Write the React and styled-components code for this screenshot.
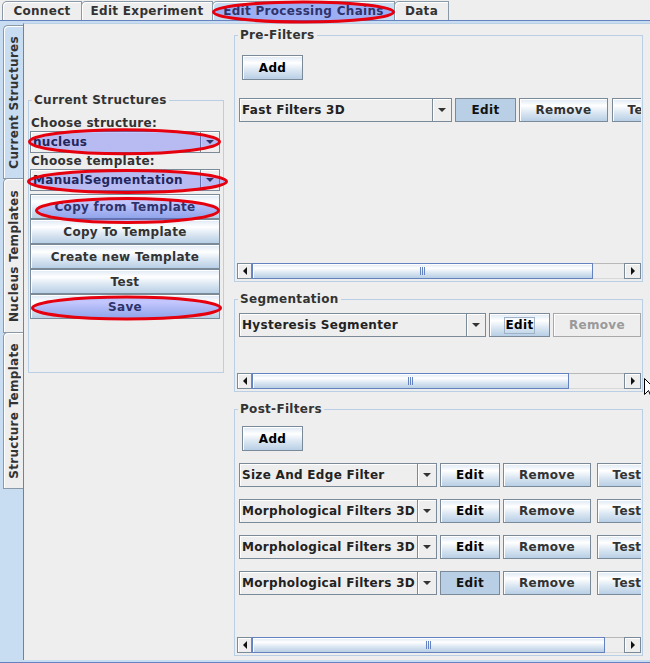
import styled, { createGlobalStyle } from "styled-components";

const GlobalStyle = createGlobalStyle`
  html, body {
    margin: 0;
    padding: 0;
    background: #eeeeee;
  }
  body {
    font-family: "DejaVu Sans", "Liberation Sans", sans-serif;
    font-size: 12px;
    font-weight: bold;
    letter-spacing: 0.3px;
    color: #333333;
  }
  * {
    box-sizing: border-box;
  }
`;

const Window = styled.div`
  position: relative;
  width: 650px;
  height: 663px;
  overflow: hidden;
  display: flex;
  flex-direction: column;
  background: #eeeeee;
`;

const TabRow = styled.div`
  display: flex;
  align-items: flex-end;
  height: 20px;
  padding-left: 2px;
`;

const TopTab = styled.div`
  width: ${(p) => p.$w}px;
  height: 19px;
  display: flex;
  align-items: center;
  justify-content: center;
  background: ${(p) => (p.$active ? "#c8ddf2" : "#eeeeee")};
  border: 1px solid #8a99a8;
  border-bottom: none;
  border-top-left-radius: 5px;
  box-shadow: inset 1px 1px 0 #ffffff;
  color: #333333;
  white-space: nowrap;
  & + & {
    margin-left: -1px;
  }
`;

const TabBody = styled.div`
  flex: 1;
  min-height: 0;
  display: flex;
  background: #c8ddf2;
  border-top: 1px solid #6382bf;
  border-bottom: 1px solid #6382bf;
  padding: 2px 0;
`;

const SideTabs = styled.div`
  width: 23px;
  flex-shrink: 0;
  display: flex;
  flex-direction: column;
  padding: 2px 0 0 3px;
`;

const SideTab = styled.div`
  height: ${(p) => p.$h}px;
  display: flex;
  align-items: center;
  justify-content: center;
  background: ${(p) => (p.$active ? "#c8ddf2" : "#eeeeee")};
  border: 1px solid #8a99a8;
  border-right: none;
  border-top-left-radius: 5px;
  box-shadow: inset 1px 1px 0 #ffffff;
  & + & {
    margin-top: -1px;
  }
`;

const SideTabLabel = styled.span`
  writing-mode: vertical-rl;
  transform: rotate(180deg);
  white-space: nowrap;
  color: #333333;
`;

const Panel = styled.div`
  flex: 1;
  min-width: 0;
  display: flex;
  align-items: flex-start;
  background: #eeeeee;
  border-left: 1px solid #6382bf;
  border-top: 1px solid #b8cfe5;
`;

const LeftCol = styled.div`
  margin: 69px 0 0 4px;
  width: 196px;
  flex-shrink: 0;
`;

const RightCol = styled.div`
  margin: 4px 0 0 10px;
  width: 409px;
  flex-shrink: 0;
  display: flex;
  flex-direction: column;
  gap: 10px;
`;

const Group = styled.fieldset`
  margin: 0;
  padding: 0;
  min-width: 0;
  width: 100%;
  border: 1px solid #b8cfe5;
`;

const GroupTitle = styled.legend`
  margin-left: 3px;
  padding: 0 2px;
  line-height: 14px;
  color: #333333;
`;

const GroupBody = styled.div`
  height: ${(p) => p.$h}px;
  display: flex;
  flex-direction: column;
  padding-top: ${(p) => p.$top || 0}px;
`;

const StackBody = styled.div`
  display: flex;
  flex-direction: column;
  padding: 8px 3px 53px 1px;
`;

const FieldLabel = styled.div`
  height: 16px;
  line-height: 16px;
  padding-left: 1px;
  color: #333333;
`;

const Btn = styled.button`
  width: ${(p) => (p.$w ? `${p.$w}px` : "100%")};
  height: ${(p) => p.$h || 24}px;
  flex-shrink: 0;
  padding: 0;
  margin: 0;
  margin-left: ${(p) => p.$push || 0}px;
  display: flex;
  align-items: center;
  justify-content: center;
  font: inherit;
  letter-spacing: inherit;
  color: ${(p) => (p.$dark ? "#000000" : "#333333")};
  border: 1px solid #7a8a99;
  background: linear-gradient(#dde8f3 0%, #ffffff 30%, #dde8f3 60%, #b8cfe5 100%);
  box-shadow: inset 1px 1px 0 #ffffff;
  white-space: nowrap;
  ${(p) =>
    p.$pressed &&
    `
    background: #b8cfe5;
    box-shadow: none;
    color: #111111;
  `}
  ${(p) =>
    p.$off &&
    `
    background: #eeeeee;
    border-color: #a8a8a8;
    color: #9a9a9a;
  `}
`;

const AddBtn = styled(Btn)`
  margin-left: 7px;
  color: #000000;
`;

const FocusRing = styled.span`
  border: 1px solid #9fb3c8;
  padding: 0 1px;
  line-height: 15px;
  color: #000000;
`;

const ButtonStack = styled.div`
  margin-top: 3px;
  display: flex;
  flex-direction: column;
`;

const Combo = styled.div`
  width: ${(p) => (p.$w ? `${p.$w}px` : "100%")};
  height: ${(p) => p.$h || 24}px;
  flex-shrink: 0;
  display: flex;
  border: 1px solid #7a8a99;
  background: #eeeeee;
  box-shadow: inset 1px 1px 0 #ffffff;
`;

const ComboText = styled.span`
  flex: 1;
  min-width: 0;
  display: flex;
  align-items: center;
  padding-left: 2px;
  overflow: hidden;
  white-space: nowrap;
  color: #222222;
`;

const ComboArrow = styled.span`
  width: 19px;
  flex-shrink: 0;
  display: flex;
  align-items: center;
  justify-content: center;
  border-left: 1px solid #7a8a99;
  box-shadow: inset 1px 1px 0 #ffffff;
  &::after {
    content: "";
    border-left: 4px solid transparent;
    border-right: 4px solid transparent;
    border-top: 4px solid #333333;
  }
`;

const ScrollPane = styled.div`
  flex: 1;
  min-height: 0;
  display: flex;
  flex-direction: column;
  margin: 0 1px 2px 2px;
`;

const Viewport = styled.div`
  flex: 1;
  min-height: 0;
  overflow: hidden;
  display: flex;
  flex-direction: column;
  gap: 12px;
  padding: ${(p) => p.$top}px 0 0 2px;
`;

const Row = styled.div`
  display: flex;
  gap: 3px;
  height: 24px;
  flex-shrink: 0;
`;

const ScrollBar = styled.div`
  height: 16px;
  flex-shrink: 0;
  display: flex;
  background: #eeeeee;
`;

const ScrollArrow = styled.div`
  width: ${(p) => p.$w}px;
  flex-shrink: 0;
  display: flex;
  align-items: center;
  justify-content: center;
  border: 1px solid #7a8a99;
  box-shadow: inset 1px 1px 0 #ffffff;
  &::after {
    content: "";
    border-top: 4px solid transparent;
    border-bottom: 4px solid transparent;
    ${(p) => (p.$dir === "left" ? "border-right: 4px solid #111;" : "border-left: 4px solid #111;")}
  }
`;

const Thumb = styled.div`
  width: ${(p) => p.$w}px;
  flex-shrink: 0;
  display: flex;
  align-items: center;
  justify-content: center;
  border: 1px solid #6382bf;
  background: linear-gradient(#dde8f3 0%, #ffffff 30%, #dde8f3 60%, #b8cfe5 100%);
  box-shadow: inset 1px 1px 0 #ffffff;
  &::after {
    content: "";
    width: 5px;
    height: 8px;
    background: repeating-linear-gradient(to right, #6382bf 0 1px, transparent 1px 2px);
  }
`;

const Track = styled.div`
  flex: 1;
  border-top: 1px solid #b8b8b8;
  border-bottom: 1px solid #d8d8d8;
`;

const Overlay = styled.svg`
  position: absolute;
  left: 0;
  top: 0;
  pointer-events: none;
`;

function Scroller({ thumb }) {
  return (
    <ScrollBar>
      <ScrollArrow $w={15} $dir="left" />
      <Thumb $w={thumb} />
      <Track />
      <ScrollArrow $w={17} $dir="right" />
    </ScrollBar>
  );
}

function FilterRow({ row }) {
  return (
    <Row>
      <Combo $w={row.combo}>
        <ComboText>{row.name}</ComboText>
        <ComboArrow />
      </Combo>
      <Btn $w={row.edit} $pressed={row.pressed} $dark>
        Edit
      </Btn>
      <Btn $w={row.remove}>Remove</Btn>
      <Btn $w={60} $push={row.push}>
        Test
      </Btn>
    </Row>
  );
}

const preRows = [
  { name: "Fast Filters 3D", combo: 213, edit: 61, remove: 89, pressed: true, push: 1 },
];

const postRows = [
  { name: "Size And Edge Filter", combo: 198, edit: 60, remove: 88, push: 3 },
  { name: "Morphological Filters 3D", combo: 198, edit: 60, remove: 88, push: 3 },
  { name: "Morphological Filters 3D", combo: 198, edit: 60, remove: 88, push: 3 },
  { name: "Morphological Filters 3D", combo: 198, edit: 60, remove: 88, push: 3, pressed: true },
];

const topTabs = [
  { label: "Connect", w: 80 },
  { label: "Edit Experiment", w: 132 },
  { label: "Edit Processing Chains", w: 183, active: true },
  { label: "Data", w: 55 },
];

const sideTabs = [
  { label: "Current Structures", h: 154, active: true },
  { label: "Nucleus Templates", h: 155 },
  { label: "Structure Template", h: 157 },
];

const marks = [
  { cx: 303.5, cy: 12, rx: 90, ry: 10 },
  { cx: 124.5, cy: 141.7, rx: 95, ry: 12 },
  { cx: 127.5, cy: 181.5, rx: 99, ry: 11 },
  { cx: 127.5, cy: 210.5, rx: 91, ry: 12 },
  { cx: 126.5, cy: 308, rx: 94, ry: 11 },
];

export default function App() {
  return (
    <>
      <GlobalStyle />
      <Window>
        <TabRow>
          {topTabs.map((t) => (
            <TopTab key={t.label} $w={t.w} $active={t.active}>
              {t.label}
            </TopTab>
          ))}
        </TabRow>
        <TabBody>
          <SideTabs>
            {sideTabs.map((t) => (
              <SideTab key={t.label} $h={t.h} $active={t.active}>
                <SideTabLabel>{t.label}</SideTabLabel>
              </SideTab>
            ))}
          </SideTabs>
          <Panel>
            <LeftCol>
              <Group>
                <GroupTitle>Current Structures</GroupTitle>
                <StackBody>
                  <FieldLabel>Choose structure:</FieldLabel>
                  <Combo $h={22}>
                    <ComboText>nucleus</ComboText>
                    <ComboArrow />
                  </Combo>
                  <FieldLabel>Choose template:</FieldLabel>
                  <Combo $h={22}>
                    <ComboText>ManualSegmentation</ComboText>
                    <ComboArrow />
                  </Combo>
                  <ButtonStack>
                    <Btn $h={25}>Copy from Template</Btn>
                    <Btn $h={25}>Copy To Template</Btn>
                    <Btn $h={25}>Create new Template</Btn>
                    <Btn $h={25}>Test</Btn>
                    <Btn $h={25}>Save</Btn>
                  </ButtonStack>
                </StackBody>
              </Group>
            </LeftCol>
            <RightCol>
              <Group>
                <GroupTitle>Pre-Filters</GroupTitle>
                <GroupBody $h={239} $top={13}>
                  <AddBtn $w={61} $h={25}>
                    Add
                  </AddBtn>
                  <ScrollPane>
                    <Viewport $top={18}>
                      {preRows.map((r, i) => (
                        <FilterRow key={i} row={r} />
                      ))}
                    </Viewport>
                    <Scroller thumb={341} />
                  </ScrollPane>
                </GroupBody>
              </Group>
              <Group>
                <GroupTitle>Segmentation</GroupTitle>
                <GroupBody $h={85}>
                  <ScrollPane>
                    <Viewport $top={7}>
                      <Row>
                        <Combo $w={247}>
                          <ComboText>Hysteresis Segmenter</ComboText>
                          <ComboArrow />
                        </Combo>
                        <Btn $w={61}>
                          <FocusRing>Edit</FocusRing>
                        </Btn>
                        <Btn $w={88} $off>
                          Remove
                        </Btn>
                      </Row>
                    </Viewport>
                    <Scroller thumb={317} />
                  </ScrollPane>
                </GroupBody>
              </Group>
              <Group>
                <GroupTitle>Post-Filters</GroupTitle>
                <GroupBody $h={239} $top={10}>
                  <AddBtn $w={61} $h={25}>
                    Add
                  </AddBtn>
                  <ScrollPane>
                    <Viewport $top={12}>
                      {postRows.map((r, i) => (
                        <FilterRow key={i} row={r} />
                      ))}
                    </Viewport>
                    <Scroller thumb={353} />
                  </ScrollPane>
                </GroupBody>
              </Group>
            </RightCol>
          </Panel>
        </TabBody>
        <Overlay width="650" height="663" viewBox="0 0 650 663">
          {marks.map((m, i) => (
            <ellipse
              key={i}
              cx={m.cx}
              cy={m.cy}
              rx={m.rx}
              ry={m.ry}
              fill="rgba(40,50,250,0.27)"
              stroke="#e6000e"
              strokeWidth="3"
            />
          ))}
          <path
            d="M644.5 378.5 L644.5 394.5 L648.5 390.5 L651.5 397.5 L653.5 396.5 L650.5 389.5 L655.5 389.5 Z"
            fill="#ffffff"
            stroke="#000000"
            strokeWidth="1"
          />
        </Overlay>
      </Window>
    </>
  );
}
